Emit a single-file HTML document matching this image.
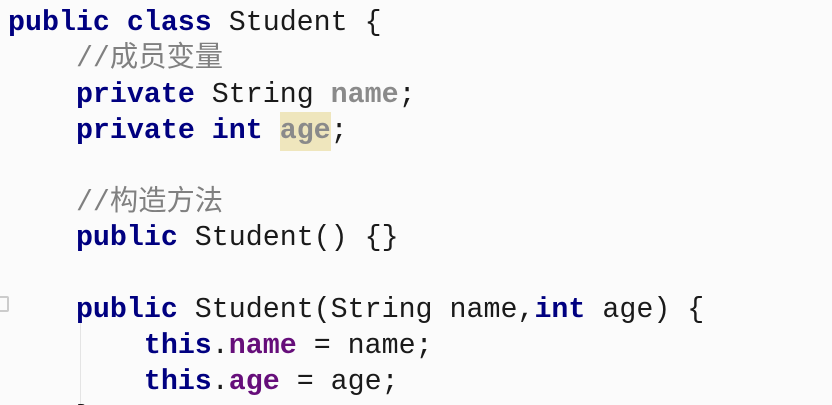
<!DOCTYPE html>
<html><head><meta charset="utf-8"><style>
html,body{margin:0;padding:0;background:#fbfbfb;width:832px;height:405px;overflow:hidden;position:relative}
pre{position:absolute;left:8px;top:6px;margin:0;height:399px;overflow:hidden;font-family:"Liberation Mono","Noto Sans CJK SC",monospace;font-size:28.3px;line-height:35.9px;color:#1a1a1a}
.k{color:#000080;font-weight:bold}
.c{color:#808080}
.f{color:#8a8a8a;font-weight:bold}
.p{color:#660e7a;font-weight:bold}
.h{background:#efe6bd;padding:3px 0 4px}
.g{position:absolute;left:80px;top:322px;width:1px;height:83px;background:#e4e4e4}
.i{position:absolute;left:-4px;top:296px;width:9px;height:12px;border:2px solid #ccc;border-radius:2px}
</style></head><body>
<div class="g"></div><div class="i"></div>
<pre><span class="k">public class</span> Student {
    <span class="c">//成员变量</span>
    <span class="k">private</span> String <span class="f">name</span>;
    <span class="k">private int</span> <span class="f h">age</span>;

    <span class="c">//构造方法</span>
    <span class="k">public</span> Student() {}

    <span class="k">public</span> Student(String name,<span class="k">int</span> age) {
        <span class="k">this</span>.<span class="p">name</span> = name;
        <span class="k">this</span>.<span class="p">age</span> = age;
    }
</pre>
</body></html>
